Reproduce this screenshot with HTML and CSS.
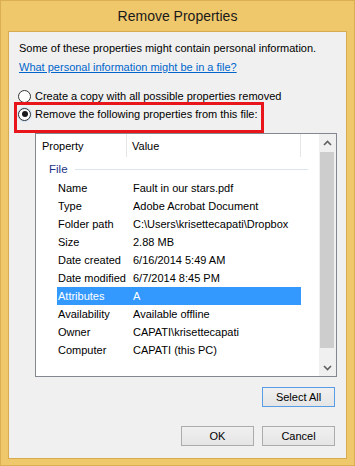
FILE: index.html
```html
<!DOCTYPE html>
<html lang="en">
<head>
    <meta charset="UTF-8">
    <meta name="viewport" content="width=device-width, initial-scale=1.0">
    <title>Remove Properties</title>
    <link rel="stylesheet" href="styles.css">
</head>
<body>
    <div class="window">
        <div class="titlebar">Remove Properties</div>

        <div class="client">
            <p class="intro">Some of these properties might contain personal information.</p>
            <a href="#" class="help-link">What personal information might be in a file?</a>

            <label class="radio radio-copy"><span class="radio-circle"></span>Create a copy with all possible properties removed</label>

            <!-- red annotation box -->
            <div class="marked">
                <label class="radio"><span class="radio-circle checked"></span>Remove the following properties from this file:</label>
            </div>

            <div class="listview">
                <div class="list-main">
                    <div class="list-header">
                        <span class="col-prop">Property</span>
                        <span class="col-value">Value</span>
                        <span class="col-rest"></span>
                    </div>

                    <div class="group"><span>File</span><span class="group-line"></span></div>

                    <div class="row"><span class="label">Name</span><span class="value">Fault in our stars.pdf</span></div>
                    <div class="row"><span class="label">Type</span><span class="value">Adobe Acrobat Document</span></div>
                    <div class="row"><span class="label">Folder path</span><span class="value">C:\Users\krisettecapati\Dropbox</span></div>
                    <div class="row"><span class="label">Size</span><span class="value">2.88 MB</span></div>
                    <div class="row"><span class="label">Date created</span><span class="value">6/16/2014 5:49 AM</span></div>
                    <div class="row"><span class="label">Date modified</span><span class="value">6/7/2014 8:45 PM</span></div>
                    <div class="row selected"><span class="label">Attributes</span><span class="value">A</span></div>
                    <div class="row"><span class="label">Availability</span><span class="value">Available offline</span></div>
                    <div class="row"><span class="label">Owner</span><span class="value">CAPATI\krisettecapati</span></div>
                    <div class="row"><span class="label">Computer</span><span class="value">CAPATI (this PC)</span></div>
                </div>

                <div class="scrollbar">
                    <div class="scroll-arrow">
                        <svg width="9" height="6" viewBox="0 0 9 6"><path d="M1 5 L4.5 1.5 L8 5" fill="none" stroke="#606060" stroke-width="1.6"/></svg>
                    </div>
                    <div class="scroll-thumb"></div>
                    <div class="scroll-space"></div>
                    <div class="scroll-arrow">
                        <svg width="9" height="6" viewBox="0 0 9 6"><path d="M1 1 L4.5 4.5 L8 1" fill="none" stroke="#606060" stroke-width="1.6"/></svg>
                    </div>
                </div>
            </div>

            <div class="select-row">
                <button class="btn focused">Select All</button>
            </div>

            <div class="dialog-buttons">
                <button class="btn">OK</button>
                <button class="btn">Cancel</button>
            </div>
        </div>
    </div>
</body>
</html>
```

FILE: styles.css
```css
body {
    margin: 0;
    padding: 0;
    font-family: "Liberation Sans", Arial, sans-serif;
    font-size: 11px;
    color: #000;
}

.window {
    width: 355px;
    height: 466px;
    box-sizing: border-box;
    background-color: #f0c86c;
    border: 1px solid #dcae52;
    padding: 0 7px 6px 7px;
    display: flex;
    flex-direction: column;
}

.titlebar {
    height: 30px;
    line-height: 30px;
    text-align: center;
    font-size: 14px;
    color: #1a1a1a;
}

.client {
    flex: 1;
    background-color: #f0f0f0;
    border: 1px solid #d9ab4f;
    padding: 8px 11px 0 10px;
    display: flex;
    flex-direction: column;
    white-space: nowrap;
}

.intro {
    margin: 0;
    line-height: 16px;
}

.help-link {
    display: block;
    margin-top: 3px;
    line-height: 16px;
    color: #0066cc;
    text-decoration: underline;
    align-self: flex-start;
}

/* Радиокнопки */
.radio {
    display: flex;
    align-items: center;
    line-height: 16px;
}

.radio-copy {
    margin-top: 13px;
}

.radio-circle {
    width: 11px;
    height: 11px;
    border: 1px solid #333;
    border-radius: 50%;
    background-color: #fff;
    margin: 0 4px 0 -1px;
    display: flex;
    align-items: center;
    justify-content: center;
    flex-shrink: 0;
}

.radio-circle.checked::after {
    content: "";
    width: 6px;
    height: 6px;
    border-radius: 50%;
    background-color: #1a1a1a;
}

.marked {
    margin: -2px 0 0 -5px;
    width: 242px;
    border: 3px solid #e8151b;
    padding: 1px 0 8px 2px;
}

.marked .radio-circle {
    box-shadow: 0 0 0 1px #cfe3f5;
}

/* Список свойств */
.listview {
    margin: 0 0 0 16px;
    width: 302px;
    height: 244px;
    flex-shrink: 0;
    box-sizing: border-box;
    border: 1px solid #828790;
    background-color: #fff;
    display: flex;
}

.list-main {
    flex: 1;
}

.list-header {
    display: flex;
    height: 25px;
    line-height: 24px;
}

.list-header span {
    border-right: 1px solid #e5e5e5;
    box-sizing: border-box;
    height: 23px;
}

.col-prop {
    width: 91px;
    padding-left: 6px;
}

.col-value {
    width: 174px;
    padding-left: 5px;
}

.col-rest {
    flex: 1;
    border-right: none !important;
}

.group {
    display: flex;
    align-items: center;
    height: 20px;
    padding: 0 11px 0 13px;
    color: #1e3287;
    font-size: 11.5px;
}

.group-line {
    flex: 1;
    height: 1px;
    background-color: #dce4ee;
    margin-left: 7px;
}

.row {
    display: flex;
    height: 18px;
    line-height: 18px;
    margin-left: 21px;
    width: 244px;
}

.row .label {
    width: 75px;
    padding-left: 1px;
}

.row.selected {
    background-color: #3399ff;
    color: #fff;
}

/* Скроллбар */
.scrollbar {
    width: 17px;
    background-color: #f0f0f0;
    display: flex;
    flex-direction: column;
}

.scroll-arrow {
    height: 17px;
    display: flex;
    align-items: center;
    justify-content: center;
}

.scroll-thumb {
    height: 196px;
    margin: 1px 2px 0 1px;
    background-color: #cdcdcd;
}

.scroll-space {
    flex: 1;
}

/* Кнопки */
.select-row,
.dialog-buttons {
    display: flex;
    justify-content: flex-end;
    gap: 8px;
}

.select-row {
    margin-top: 10px;
}

.dialog-buttons {
    margin-top: 19px;
}

.btn {
    width: 73px;
    height: 20px;
    padding: 0;
    font-family: "Liberation Sans", Arial, sans-serif;
    font-size: 11px;
    color: #000;
    background: linear-gradient(#f0f0f0, #e5e5e5);
    border: 1px solid #acacac;
}

.btn.focused {
    border-color: #569de5;
}
```
